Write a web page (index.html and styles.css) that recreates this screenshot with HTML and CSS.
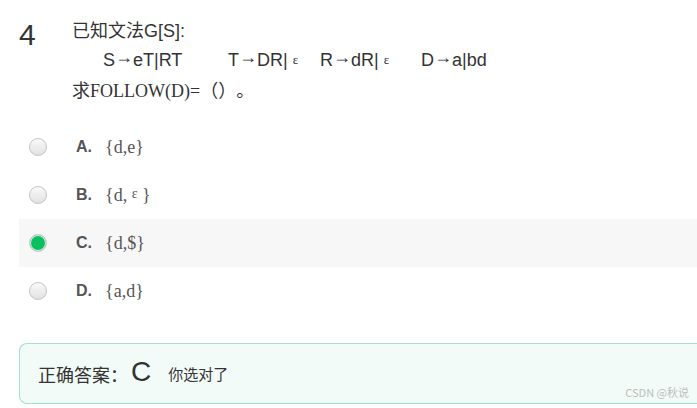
FILE: index.html
```html
<!DOCTYPE html>
<html lang="zh-CN">
<head>
    <meta charset="UTF-8">
    <meta name="viewport" content="width=device-width, initial-scale=1.0">
    <title>第4题</title>
    <link rel="stylesheet" href="styles.css">
</head>
<body>
    <div class="question">
        <div class="q-num">4</div>
        <div class="q-stem">
            <p class="line">已知文法G[S]:</p>
            <p class="line rules">
                <span class="rule r1">S<span class="arr">→</span>eT|RT</span><span class="rule r2">T<span class="arr">→</span>DR| <span class="eps">ε</span></span><span class="rule r3">R<span class="arr">→</span>dR| <span class="eps">ε</span></span><span class="rule">D<span class="arr">→</span>a|bd</span>
            </p>
            <p class="line serif">求FOLLOW(D)=<span class="cjk">（）。</span></p>
        </div>
    </div>

    <ul class="options">
        <li class="option"><span class="radio"></span><b>A.</b><span class="opt-text">{d,e}</span></li>
        <li class="option"><span class="radio"></span><b>B.</b><span class="opt-text">{d, <span class="eps">ε</span> }</span></li>
        <li class="option checked"><span class="radio"></span><b>C.</b><span class="opt-text">{d,$}</span></li>
        <li class="option"><span class="radio"></span><b>D.</b><span class="opt-text">{a,d}</span></li>
    </ul>

    <div class="answer">
        <span class="answer-label">正确答案：</span>
        <span class="answer-key">C</span>
        <span class="answer-note">你选对了</span>
    </div>

    <div class="watermark">CSDN @秋说</div>
</body>
</html>
```

FILE: styles.css
```css
html, body {
    margin: 0;
    padding: 0;
    background: #fff;
    overflow: hidden;
}
body {
    font-family: "Liberation Sans", Arial, "Noto Sans CJK SC", sans-serif;
    color: #333;
    padding: 17px 0 0 19px;
    position: relative;
    height: 391px;
    text-spacing-trim: space-all;
}
.question {
    display: flex;
}
.q-num {
    width: 53px;
    font-size: 30px;
    line-height: 29px;
    padding-top: 3px;
    color: #333;
}
.q-stem {
    font-size: 18px;
    line-height: 29px;
}
.line {
    margin: 0;
}
.rules {
    padding-left: 31px;
}
.rule {
    display: inline-block;
}
.r1 {
    width: 125px;
}
.r2 {
    width: 92px;
}
.r3 {
    width: 101px;
}
.arr {
    line-height: 1;
    vertical-align: 3px;
}
.eps {
    font-family: "Liberation Serif", "Times New Roman", serif;
    font-size: 13px;
    line-height: 1;
    vertical-align: 2px;
}
.serif {
    font-family: "Liberation Serif", "Times New Roman", "Noto Sans CJK SC", serif;
    font-size: 18px;
}
.cjk {
    font-family: "Noto Sans CJK SC", sans-serif;
    text-spacing-trim: space-all;
}
.options {
    list-style: none;
    margin: 17px 0 0;
    padding: 0;
}
.option {
    display: flex;
    align-items: center;
    height: 48px;
    padding-left: 10px;
}
.option.checked {
    background: #f7f7f7;
}
.radio {
    width: 16px;
    height: 16px;
    border-radius: 50%;
    border: 1px solid #c4c4c4;
    background: linear-gradient(#fafafa, #e2e2e2);
    margin-right: 29px;
}
.checked .radio {
    background: #07c160;
    border: 1px solid #cfcfcf;
    box-shadow: inset 0 0 0 1px #e8e8e8;
}
.option b {
    font-size: 16px;
    color: #555;
    width: 29px;
}
.opt-text {
    font-family: "Liberation Serif", "Times New Roman", serif;
    font-size: 18px;
    color: #555;
}
.opt-text .eps {
    font-size: 14px;
    vertical-align: 3px;
}
.answer {
    display: flex;
    align-items: center;
    margin-top: 28px;
    height: 59px;
    padding-left: 18px;
    background: #f3fbf8;
    border: 1px solid #9fe2c6;
    border-right: none;
    border-radius: 8px 0 0 8px;
    font-family: "Noto Sans CJK SC", sans-serif;
}
.answer-label {
    font-size: 18px;
    color: #333;
}
.answer-key {
    font-family: "Liberation Sans", Arial, sans-serif;
    font-size: 28px;
    margin: -4px 17px 0 3px;
}
.answer-note {
    font-size: 15px;
    color: #333;
}
.watermark {
    position: absolute;
    right: 8px;
    bottom: 8px;
    font-size: 11px;
    color: #bdbdbd;
    font-family: "Noto Sans CJK SC", sans-serif;
}
```
